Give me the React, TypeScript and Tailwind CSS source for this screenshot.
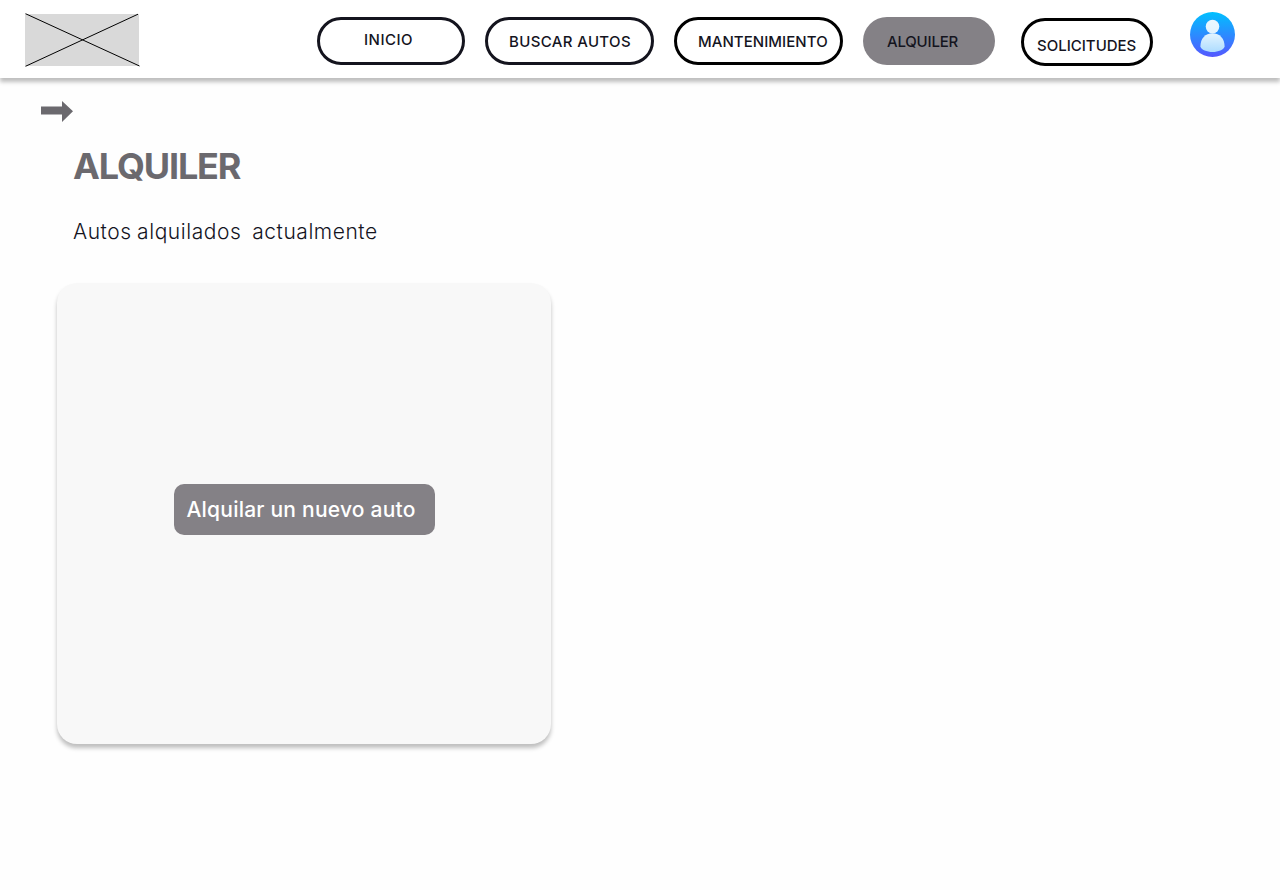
const navItems = [
  { label: "INICIO", pill: "ml-[177px] mt-[17px] w-[148px] border-[3px] border-[#14141e] pl-[44px] pt-[8px]", text: "tracking-[0.5px]" },
  { label: "BUSCAR AUTOS", pill: "ml-5 mt-[17px] w-[169px] border-[3px] border-[#14141e] pl-[21px] pt-[10px]", text: "tracking-[0.36px]" },
  { label: "MANTENIMIENTO", pill: "ml-5 mt-[17px] w-[169px] border-[3px] border-black pl-[21px] pt-[10px]", text: "tracking-[0.06px]" },
  { label: "ALQUILER", pill: "ml-5 mt-[17px] w-[132px] bg-[#848186] pl-[24px] pt-[13px]", text: "tracking-[-0.2px]" },
  { label: "SOLICITUDES", pill: "ml-[26px] mt-[18px] w-[132px] border-[3px] border-black pl-[13px] pt-[13px]", text: "tracking-normal" },
];

function Logo() {
  return (
    <svg className="ml-[25px] mt-[13px] h-[54px] w-[115px] shrink-0" viewBox="0 0 115 54" aria-hidden="true">
      <rect y="1" width="114" height="52" fill="#d9d9d9" />
      <path d="M.5.7 114.5 53M.5 53.3 113 1.2" stroke="#000" fill="none" />
    </svg>
  );
}

function Avatar() {
  return (
    <svg className="ml-[37px] mt-3 h-[45px] w-[45px] shrink-0" viewBox="0 0 45 45" aria-hidden="true">
      <defs>
        <linearGradient id="avatarBack" x1="0" y1="0" x2="0" y2="1">
          <stop stopColor="#00c0ff" />
          <stop offset="1" stopColor="#5558ff" />
        </linearGradient>
        <linearGradient id="avatarBody" gradientUnits="userSpaceOnUse" x1="0" y1="8" x2="0" y2="40">
          <stop stopColor="#ecf7ff" />
          <stop offset="0.45" stopColor="#e1f3ff" />
          <stop offset="1" stopColor="#addcff" />
        </linearGradient>
      </defs>
      <circle cx="22.5" cy="22.5" r="22.5" fill="url(#avatarBack)" />
      <circle cx="22.5" cy="14.6" r="6.8" fill="url(#avatarBody)" />
      <path d="M10.4 34.5C10.4 26.5 15.3 21.2 22.5 21.2S34.6 26.5 34.6 34.5C33.8 37.7 28.2 40 22.5 40S11.2 37.7 10.4 34.5Z" fill="url(#avatarBody)" />
    </svg>
  );
}

export default function App() {
  return (
    <div className="flex h-[890px] w-[1280px] flex-col overflow-hidden bg-[#fefefe] font-['Inter',sans-serif] text-[#14141e]">
      <header className="flex h-[78px] w-full shrink-0 items-start bg-white shadow-[0_4px_4px_rgba(0,0,0,0.25)]">
        <Logo />
        <nav className="flex items-start">
          {navItems.map((item) => (
            <button key={item.label} className={`flex h-12 shrink-0 items-start rounded-full text-[15px] leading-6 font-medium whitespace-nowrap ${item.pill}`}>
              <span className={item.text}>{item.label}</span>
            </button>
          ))}
        </nav>
        <Avatar />
      </header>
      <main className="flex flex-col items-start">
        <svg className="ml-[41px] mt-[23px] h-[21px] w-8" viewBox="0 0 32 21" aria-hidden="true">
          <path d="M0 5.6H21V0L32 10.3 21 21V13.6H0Z" fill="#6b696e" />
        </svg>
        <h1 className="ml-[73px] mt-[22px] text-[36px] leading-[44px] font-bold tracking-[-1.15px] text-[#6b696e]">ALQUILER</h1>
        <p className="ml-[73px] mt-[29px] text-[21px] leading-[30px] font-light tracking-[0.55px] [word-spacing:-1px] whitespace-pre">Autos alquilados  actualmente</p>
        <section className="ml-[57px] mt-[36px] flex h-[461px] w-[494px] items-start justify-center rounded-[20px] bg-[#f8f8f8] pt-[201px] shadow-[0_4px_4px_rgba(0,0,0,0.25)]">
          <button className="flex h-[51px] w-[261px] items-start rounded-[10px] bg-[#848186] pl-[13px] pt-[11px] text-[21px] leading-[30px] font-medium tracking-[0.22px] whitespace-nowrap text-white">
            Alquilar un nuevo auto
          </button>
        </section>
      </main>
    </div>
  );
}
